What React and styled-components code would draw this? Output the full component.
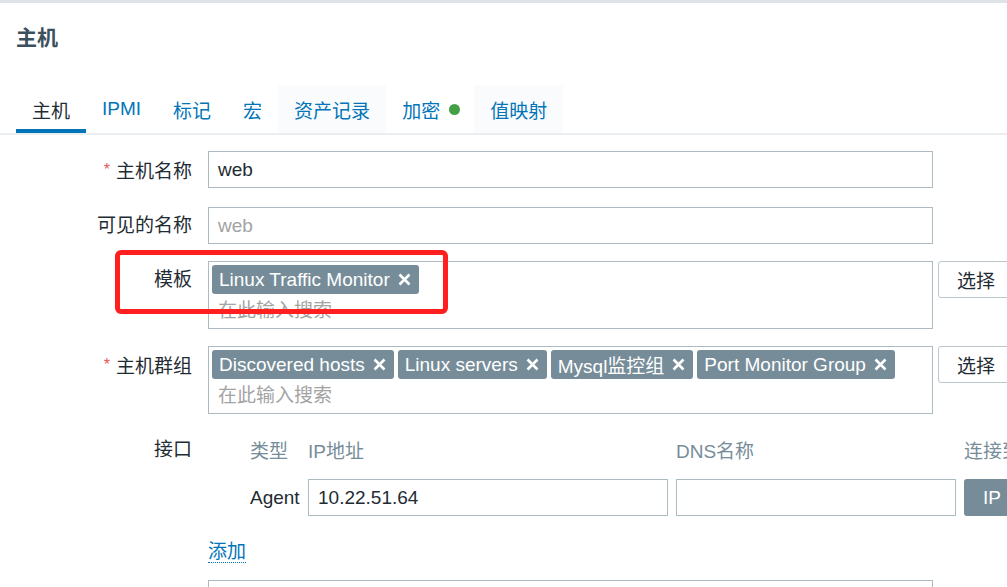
import React from "react";
import styled, { createGlobalStyle } from "styled-components";

const GlobalStyle = createGlobalStyle`
  html, body {
    margin: 0;
    padding: 0;
    overflow: hidden;
    background: #ffffff;
  }
  body {
    font-family: "Liberation Sans", Arial, "Noto Sans CJK SC", sans-serif;
    color: #1f2c33;
  }
`;

const Page = styled.div`
  position: relative;
  width: 1007px;
  height: 587px;
  overflow: hidden;
  border-top: 3px solid #dde3e8;
  box-sizing: border-box;
`;

const Title = styled.h1`
  margin: 0;
  padding: 23px 16px 0;
  font-size: 21px;
  line-height: 24px;
  font-weight: bold;
  color: #3b4f5c;
`;

const TabBar = styled.ul`
  list-style: none;
  margin: 35px 0 0;
  padding: 0 0 0 16px;
  display: flex;
  border-bottom: 2px solid #ebeef0;
`;

const Tab = styled.li`
  position: relative;
  display: flex;
  align-items: center;
  height: 48px;
  padding: 0 ${(p) => (p.$dot ? 14 : 16)}px 0 16px;
  font-size: 19px;
  color: ${(p) => (p.$active ? "#1f2c33" : "#0275b8")};
  background: ${(p) => (p.$shade ? "#f9fbfd" : "transparent")};
  box-shadow: ${(p) => (p.$active ? "inset 0 -4px 0 #0275b8" : "none")};
`;

const Dot = styled.span`
  width: 11px;
  height: 11px;
  border-radius: 50%;
  background: #43a047;
  margin-left: 9px;
`;

const Form = styled.div`
  display: grid;
  grid-template-columns: 192px 1fr;
  column-gap: 16px;
  row-gap: 17px;
  margin-top: 16px;
`;

const Label = styled.div`
  text-align: right;
  font-size: 19px;
  line-height: 37px;
  white-space: nowrap;
`;

const Star = styled.span`
  color: #e45959;
  font-size: 16px;
  margin-right: 6px;
  vertical-align: 3px;
`;

const Field = styled.div`
  display: flex;
  align-items: flex-start;
  gap: 5px;
`;

const TextBox = styled.div`
  box-sizing: border-box;
  width: ${(p) => p.$w || 725}px;
  height: 37px;
  border: 1px solid #acbbc2;
  padding: 0 9px;
  font-size: 19px;
  line-height: 35px;
  color: ${(p) => (p.$ghost ? "#a3a3a3" : "#1f2c33")};
  flex-shrink: 0;
`;

const MultiBox = styled.div`
  box-sizing: border-box;
  width: 725px;
  height: 68px;
  border: 1px solid #acbbc2;
  padding: 3px;
  flex-shrink: 0;
`;

const Chips = styled.div`
  display: flex;
  flex-wrap: wrap;
  gap: 4px;
`;

const Chip = styled.span`
  display: inline-flex;
  align-items: center;
  height: 29px;
  padding: 0 8px 0 7px;
  border-radius: 3px;
  background: #768d99;
  color: #ffffff;
  font-size: 19px;
  white-space: nowrap;
  svg {
    margin-left: 8px;
  }
`;

const Search = styled.div`
  padding-left: 6px;
  font-size: 19px;
  line-height: 33px;
  color: #a3a3a3;
`;

const SelectButton = styled.button`
  box-sizing: border-box;
  height: 37px;
  padding: 0 18px;
  border: 1px solid #bcc6cb;
  border-radius: 3px;
  background: #ffffff;
  color: #1f2c33;
  font-family: inherit;
  font-size: 19px;
  flex-shrink: 0;
`;

const Interfaces = styled.div`
  display: grid;
  grid-template-columns: 34px 50px 360px 280px 90px;
  grid-template-rows: 37px 37px;
  column-gap: 8px;
  row-gap: 11px;
  align-items: center;
`;

const ColHead = styled.div`
  font-size: 19px;
  color: #768d99;
  white-space: nowrap;
`;

const Cell = styled.div`
  font-size: 19px;
  white-space: nowrap;
`;

const IpButton = styled.div`
  box-sizing: border-box;
  height: 37px;
  width: 80px;
  padding-left: 19px;
  border-radius: 3px;
  background: #768d99;
  color: #ffffff;
  font-size: 19px;
  line-height: 37px;
`;

const AddLink = styled.span`
  display: inline-block;
  margin-top: 8px;
  font-size: 19px;
  line-height: 21px;
  color: #0275b8;
  border-bottom: 1px dotted #0275b8;
`;

const Highlight = styled.div`
  position: absolute;
  left: 115px;
  top: 247px;
  width: 333px;
  height: 64px;
  box-sizing: border-box;
  border: 5px solid #ff1f1f;
  border-radius: 6px;
  pointer-events: none;
`;

const Cross = () => (
  <svg width="13" height="13" viewBox="0 0 13 13">
    <path d="M1.5 1.5 L11.5 11.5 M11.5 1.5 L1.5 11.5" stroke="#fff" strokeWidth="2.6" />
  </svg>
);

const tabs = [
  { name: "主机", active: true },
  { name: "IPMI" },
  { name: "标记" },
  { name: "宏" },
  { name: "资产记录", shade: true },
  { name: "加密", dot: true },
  { name: "值映射", shade: true },
];

const groups = ["Discovered hosts", "Linux servers", "Mysql监控组", "Port Monitor Group"];

export default function App() {
  return (
    <Page>
      <GlobalStyle />
      <Title>主机</Title>
      <TabBar>
        {tabs.map((t) => (
          <Tab key={t.name} $active={t.active} $shade={t.shade} $dot={t.dot}>
            {t.name}
            {t.dot && <Dot />}
          </Tab>
        ))}
      </TabBar>
      <Form>
        <Label><Star>*</Star>主机名称</Label>
        <Field><TextBox>web</TextBox></Field>

        <Label>可见的名称</Label>
        <Field><TextBox $ghost>web</TextBox></Field>

        <Label>模板</Label>
        <Field>
          <MultiBox>
            <Chips>
              <Chip>Linux Traffic Monitor<Cross /></Chip>
            </Chips>
            <Search>在此输入搜索</Search>
          </MultiBox>
          <SelectButton>选择</SelectButton>
        </Field>

        <Label><Star>*</Star>主机群组</Label>
        <Field>
          <MultiBox>
            <Chips>
              {groups.map((g) => (
                <Chip key={g}>{g}<Cross /></Chip>
              ))}
            </Chips>
            <Search>在此输入搜索</Search>
          </MultiBox>
          <SelectButton>选择</SelectButton>
        </Field>

        <Label>接口</Label>
        <Interfaces>
          <span />
          <ColHead>类型</ColHead>
          <ColHead>IP地址</ColHead>
          <ColHead>DNS名称</ColHead>
          <ColHead>连接到</ColHead>
          <span />
          <Cell>Agent</Cell>
          <TextBox $w={360}>10.22.51.64</TextBox>
          <TextBox $w={280} />
          <IpButton>IP</IpButton>
        </Interfaces>

        <Label />
        <div><AddLink>添加</AddLink></div>

        <Label />
        <Field><TextBox /></Field>
      </Form>
      <Highlight />
    </Page>
  );
}
